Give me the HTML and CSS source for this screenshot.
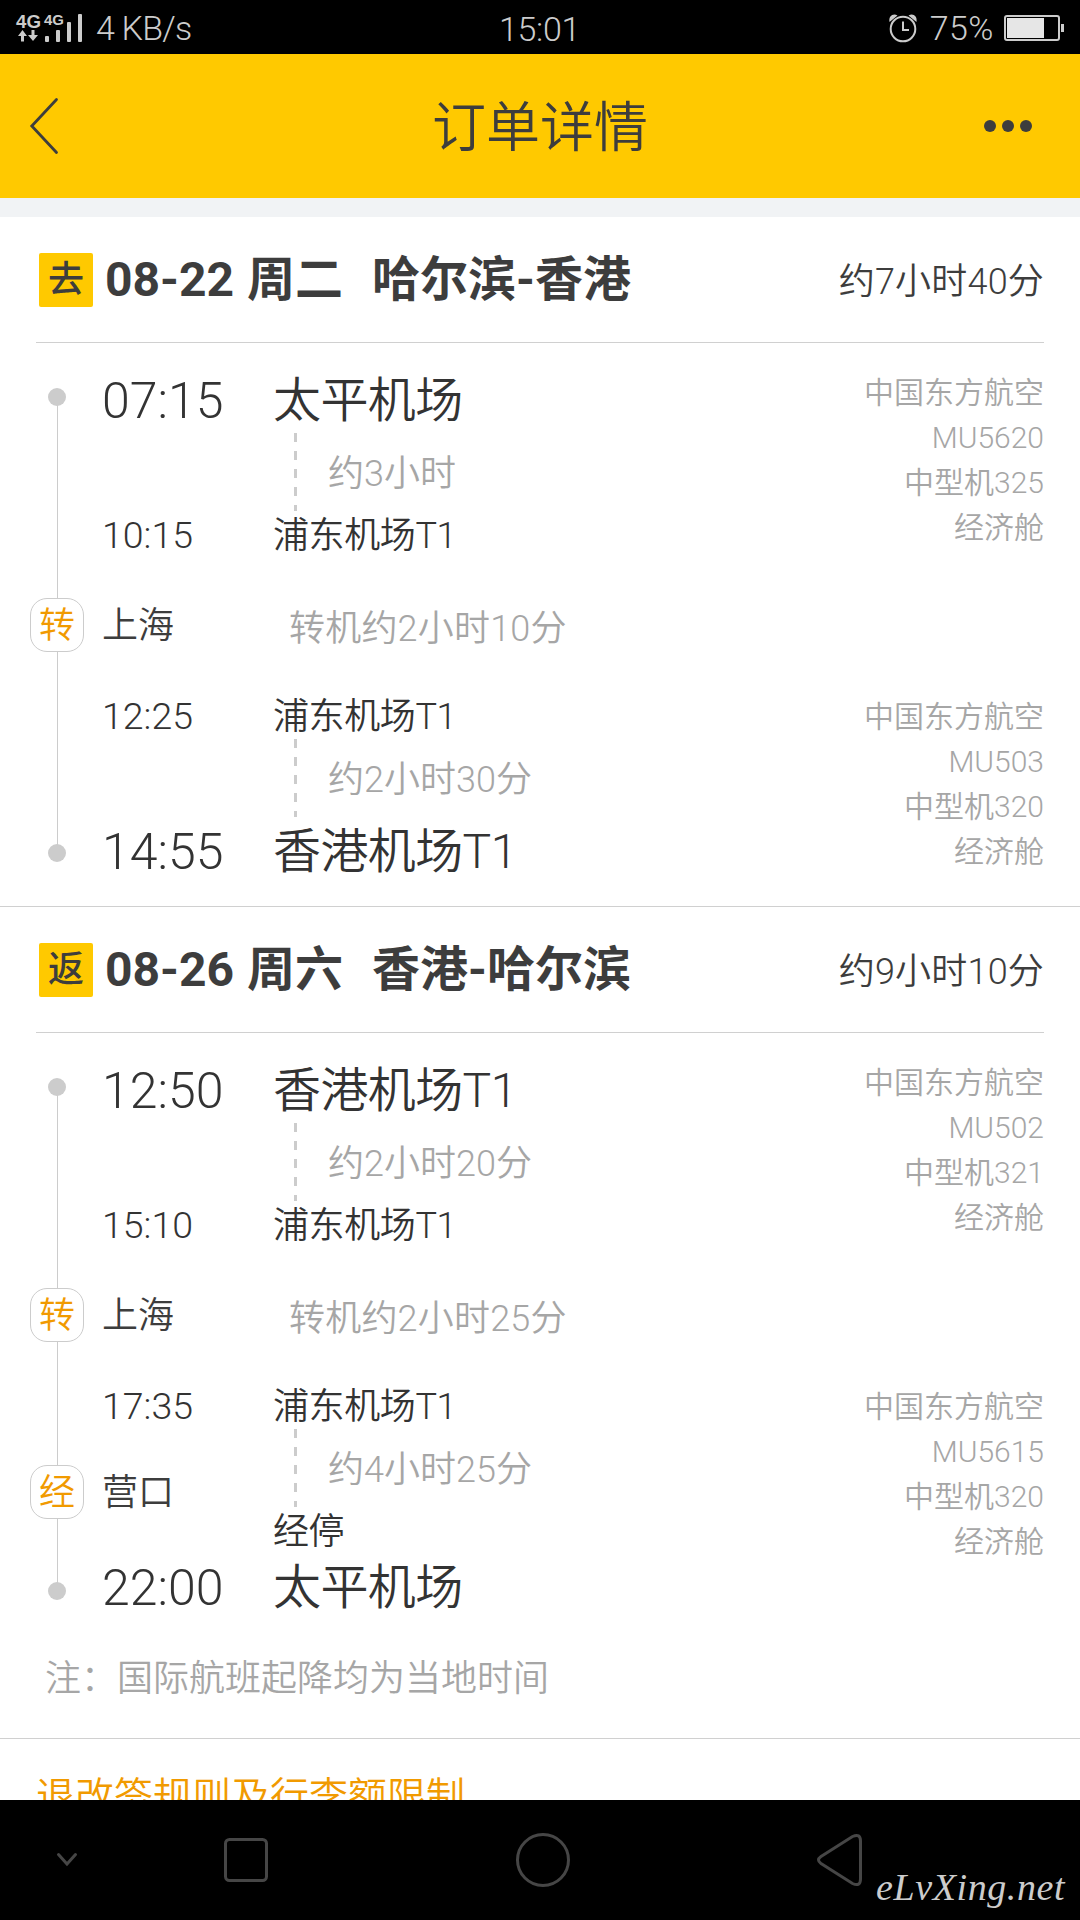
FILE: index.html
```html
<!DOCTYPE html>
<html lang="zh-CN">
<head>
<meta charset="utf-8">
<title>订单详情</title>
<link rel="stylesheet" href="styles.css">
</head>
<body>
<div class="screen">
  <div class="status">
    <div class="status-left">
      <svg class="signal" width="68" height="30" viewBox="0 0 68 30">
        <text class="net" x="0" y="14.5" font-size="19" textLength="25" lengthAdjust="spacingAndGlyphs">4G</text>
        <text class="net" x="28" y="11.5" font-size="15" textLength="20" lengthAdjust="spacingAndGlyphs">4G</text>
        <path d="M6.500 17l4.500 6h-3v5.500h-3v-5.500h-3zM17 28l-5-6h3.500v-5h3v5h3.500z"/>
        <rect x="29" y="23" width="4" height="6" rx="1"/><rect x="40" y="17" width="4" height="12" rx="1"/>
        <rect x="51" y="9" width="4" height="20" rx="1"/><rect x="62" y="1" width="4" height="28" rx="1"/>
      </svg>
      <span class="speed">4 KB/s</span>
    </div>
    <span class="clock">15:01</span>
    <div class="status-right">
      <svg class="alarm" width="28" height="30" viewBox="0 0 28 30">
        <circle cx="14" cy="16" r="12.300" fill="none" stroke="#ccc" stroke-width="2"/>
        <path d="M14 8.500V17h6" fill="none" stroke="#ccc" stroke-width="2"/>
        <path d="M.500 9C-.500 3 4 0 8.500 2.500zM27.500 9C28.500 3 24 0 19.500 2.500z"/>
      </svg>
      <span class="percent">75%</span>
      <svg width="60" height="26" viewBox="0 0 60 26">
        <rect x="1" y="1" width="54" height="24" rx="2" fill="none" stroke="#ccc" stroke-width="2"/>
        <rect x="3" y="3" width="37" height="20" fill="#e6e6e6"/><rect x="57" y="9" width="3" height="8"/>
      </svg>
    </div>
  </div>

  <header class="bar">
    <svg width="28" height="56" viewBox="0 0 28 56"><path d="M26.500 1.500L1.800 28l24.700 26.500" fill="none" stroke="#3d3d3d" stroke-width="2.800" stroke-linecap="round"/></svg>
    <h1>订单详情</h1>
    <svg width="48" height="12" viewBox="0 0 48 12"><circle cx="6" cy="6" r="6"/><circle cx="24" cy="6" r="6"/><circle cx="42" cy="6" r="6"/></svg>
  </header>

  <main class="content">
    <section class="trip">
      <div class="trip-head">
        <span class="tag">去</span>
        <h2><span class="date">08-22</span><span class="week">周二</span><span class="route">哈尔滨-香港</span></h2>
        <span class="total">约7小时40分</span>
      </div>
      <div class="route-map">
        <div class="leg">
          <div class="stops">
            <div class="row big"><i class="node"><b class="dot"></b></i><span class="time">07:15</span></div>
            <div class="gap"></div>
            <div class="row"><i class="node"></i><span class="time">10:15</span></div>
          </div>
          <div class="places">
            <div class="row big">太平机场</div>
            <div class="flight"><i class="dash"></i><span>约3小时</span></div>
            <div class="row">浦东机场T1</div>
          </div>
          <div class="info"><p>中国东方航空</p><p>MU5620</p><p>中型机325</p><p>经济舱</p></div>
        </div>
        <div class="transfer"><i class="node pill">转</i><span class="city">上海</span><span class="wait">转机约2小时10分</span></div>
        <div class="leg last">
          <div class="stops">
            <div class="row"><i class="node"></i><span class="time">12:25</span></div>
            <div class="gap"></div>
            <div class="row big"><i class="node"><b class="dot end"></b></i><span class="time">14:55</span></div>
          </div>
          <div class="places">
            <div class="row">浦东机场T1</div>
            <div class="flight"><i class="dash"></i><span>约2小时30分</span></div>
            <div class="row big">香港机场T1</div>
          </div>
          <div class="info"><p>中国东方航空</p><p>MU503</p><p>中型机320</p><p>经济舱</p></div>
        </div>
      </div>
    </section>

    <section class="trip return">
      <div class="trip-head">
        <span class="tag">返</span>
        <h2><span class="date">08-26</span><span class="week">周六</span><span class="route">香港-哈尔滨</span></h2>
        <span class="total">约9小时10分</span>
      </div>
      <div class="route-map">
        <div class="leg">
          <div class="stops">
            <div class="row big"><i class="node"><b class="dot"></b></i><span class="time">12:50</span></div>
            <div class="gap"></div>
            <div class="row"><i class="node"></i><span class="time">15:10</span></div>
          </div>
          <div class="places">
            <div class="row big">香港机场T1</div>
            <div class="flight"><i class="dash"></i><span>约2小时20分</span></div>
            <div class="row">浦东机场T1</div>
          </div>
          <div class="info"><p>中国东方航空</p><p>MU502</p><p>中型机321</p><p>经济舱</p></div>
        </div>
        <div class="transfer"><i class="node pill">转</i><span class="city">上海</span><span class="wait">转机约2小时25分</span></div>
        <div class="leg last">
          <div class="stops spread">
            <div class="row"><i class="node"></i><span class="time">17:35</span></div>
            <div class="stopover"><i class="node pill">经</i><span class="city">营口</span></div>
            <div class="row big"><i class="node"><b class="dot end"></b></i><span class="time">22:00</span></div>
          </div>
          <div class="places">
            <div class="row">浦东机场T1</div>
            <div class="flight"><i class="dash"></i><span>约4小时25分</span></div>
            <div class="row">经停</div>
            <div class="row big">太平机场</div>
          </div>
          <div class="info"><p>中国东方航空</p><p>MU5615</p><p>中型机320</p><p>经济舱</p></div>
        </div>
      </div>
      <p class="note">注：国际航班起降均为当地时间</p>
    </section>
    <div class="rules">退改签规则及行李额限制</div>
  </main>

  <nav class="nav">
    <svg class="hide" width="20" height="14" viewBox="0 0 20 14"><path d="M1.500 1.500l8.500 9.500 8.500-9.500"/></svg>
    <svg class="recent" width="44" height="44" viewBox="0 0 44 44"><rect x="1.500" y="1.500" width="41" height="41" rx="4"/></svg>
    <svg class="home" width="54" height="54" viewBox="0 0 54 54"><circle cx="27" cy="27" r="25.500"/></svg>
    <svg class="back" width="46" height="54" viewBox="0 0 46 54"><path d="M4 23.500L35.500 3.500Q43.500 0 43.500 8V46Q43.500 54 35.500 50.500L4 30.500Q-1 27 4 23.500z"/></svg>
    <span class="watermark">eLvXing.net</span>
  </nav>
</div>
</body>
</html>
```
FILE: styles.css
```css
* { box-sizing: border-box; margin: 0; padding: 0; }
body {
  width: 1080px;
  font-family: Roboto, "Noto Sans CJK SC", sans-serif;
  font-weight: 350;
  color: #333;
  background: #fff;
}
i { font-style: normal; }
svg { display: block; flex: none; overflow: visible; }
.screen { width: 1080px; height: 1920px; display: flex; flex-direction: column; overflow: hidden; }

.status {
  height: 54px;
  flex: none;
  display: grid;
  grid-template-columns: 499px 1fr auto;
  background: #000;
  color: #ccc;
  font-size: 34px;
  line-height: 54px;
}
.status svg { fill: #ccc; }
.status-left { display: flex; align-items: center; padding-left: 16px; }
.net { font-family: "Liberation Sans", sans-serif; font-weight: 700; }
.speed { margin-left: 12px; letter-spacing: -0.800px; }
.clock { padding-top: 2px; letter-spacing: -0.300px; }
.status-right { display: flex; align-items: center; padding-right: 16px; }
.percent { margin: 0 10px 0 13px; letter-spacing: 0.500px; }

.bar {
  height: 144px;
  flex: none;
  display: grid;
  grid-template-columns: 402px 1fr 48px;
  align-items: center;
  padding: 0 48px 0 30px;
  background: #ffc900;
  color: #3d3d3d;
  fill: #3d3d3d;
}
.bar h1 { font-size: 54px; font-weight: 350; line-height: 138px; padding-top: 6px; }

.content { flex: 1; min-height: 0; overflow: hidden; border-top: 19px solid #f1f3f5; }
.trip { height: 690px; border-bottom: 1px solid #d0d0d0; }
.trip.return { height: 832px; }
.trip-head {
  height: 126px;
  margin: 0 36px;
  padding-left: 3px;
  display: flex;
  align-items: center;
  border-bottom: 1px solid #d0d0d0;
  color: #3d3d3d;
}
.tag {
  width: 54px;
  height: 54px;
  border-radius: 2px;
  background: #ffc900;
  font-size: 36px;
  font-weight: 500;
  line-height: 55px;
  text-align: center;
}
.trip-head h2 { display: flex; align-items: baseline; font-size: 48px; font-weight: 700; line-height: 60px; }
.date { margin-left: 12px; }
.week { margin-left: 13px; }
.route { margin-left: 29px; }
.total { margin-left: auto; padding-bottom: 4px; font-size: 36px; letter-spacing: 0.200px; }

.route-map { position: relative; padding: 23px 36px 0 30px; }
.route-map::before {
  content: "";
  position: absolute;
  left: 57px;
  top: 54px;
  bottom: 28px;
  width: 1px;
  background: #ccc;
}
.leg { display: flex; position: relative; }
.stops { width: 243px; display: flex; flex-direction: column; }
.stops.spread { justify-content: space-between; }
.row { height: 46px; display: flex; align-items: center; font-size: 36px; line-height: 42px; white-space: nowrap; }
.row.big { height: 66px; font-size: 48px; line-height: 62px; }
.places .row { padding-top: 4px; letter-spacing: -0.400px; }
.places .row.big { letter-spacing: -0.600px; padding-top: 3px; }
.gap { height: 79px; }
.node { width: 54px; flex: none; display: flex; justify-content: center; }
.dot { width: 18px; height: 18px; border-radius: 50%; background: #ccc; margin-bottom: 4px; }
.dot.end { margin: 6px 0 0; }
.return .dot.end { margin-top: 10px; }
.time { margin-left: 18px; padding-top: 1px; font-size: 37.500px; }
.big .time { font-size: 50px; padding-top: 3px; }
.flight { height: 78px; display: flex; align-items: center; font-size: 36px; color: #a6a6a6; margin: 1px 0 0; }
.flight span { padding-bottom: 4px; }
.dash {
  width: 3px;
  height: 78px;
  margin: 0 31px 0 21px;
  background: repeating-linear-gradient(#ccc 0 9px, transparent 9px 18px);
}
.info { margin-left: auto; padding-top: 4px; text-align: right; font-size: 30px; line-height: 45px; color: #a6a6a6; }
.last .info { padding-top: 2px; }
.transfer { display: flex; align-items: center; height: 54px; margin: 41px 0 40px; font-size: 36px; position: relative; }
.pill {
  height: 54px;
  border: 1px solid #ccc;
  border-radius: 17px;
  background: #fff;
  color: #f19a00;
  font-size: 36px;
  line-height: 54px;
}
.city { margin-left: 18px; padding-top: 2px; color: #3d3d3d; line-height: 54px; }
.transfer .city { width: 187px; }
.wait { color: #a6a6a6; letter-spacing: 0.200px; }
.stopover { display: flex; align-items: center; height: 54px; font-size: 36px; position: relative; top: 1px; }
.note { padding: 33px 0 0 45px; font-size: 36px; line-height: 54px; color: #a6a6a6; }
.rules { padding: 29px 36px 0; font-size: 39px; line-height: 58px; color: #f19a00; }

.nav {
  height: 120px;
  flex: none;
  position: relative;
  display: flex;
  align-items: center;
  background: #000;
  fill: none;
  stroke: #464646;
  stroke-width: 3;
  stroke-linecap: round;
}
.hide { margin-left: 57px; }
.recent { margin-left: 147px; }
.home { margin-left: 248px; }
.back { margin-left: 247px; }
.watermark {
  position: absolute;
  left: 876px;
  top: 62px;
  font: italic 400 38px/50px "Liberation Serif", serif;
  letter-spacing: 0.600px;
  color: #ccc;
}
```
